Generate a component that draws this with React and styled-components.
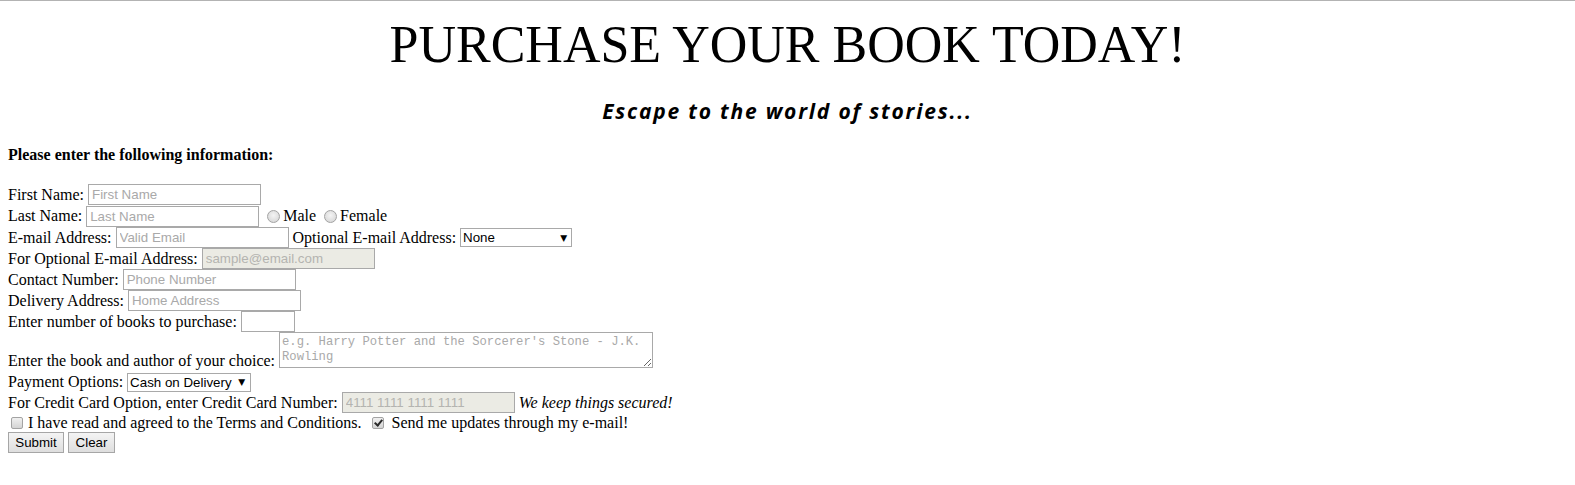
import React from "react";
import styled, {createGlobalStyle} from "styled-components";

const GlobalStyle = createGlobalStyle`
    html, body {
        margin: 0;
        padding: 0;
        background: #fff;
    }
    body {
        font-family: "Liberation Serif", "Times New Roman", serif;
        font-size: 16px;
        color: #000;
    }
`;

const CONTROL_FONT = `13.33px "Liberation Sans", Arial, sans-serif`;

const TopRule = styled.div`
    height: 1px;
    background: #b3b3b3;
`;

const Page = styled.div`
    padding: 0 8px 30px;
`;

const Title = styled.h1`
    margin: 15px 0 0;
    font-size: 52px;
    font-weight: normal;
    line-height: 57px;
    text-align: center;
`;

const Tagline = styled.h3`
    margin: 24px 0 0;
    font-family: "Open Sans", Lato, sans-serif;
    font-style: italic;
    font-weight: bold;
    font-size: 21px;
    letter-spacing: 1.8px;
    line-height: 28px;
    text-align: center;
`;

const Intro = styled.h4`
    margin: 20px 0 0;
    font-size: 16px;
    line-height: 19px;
    font-weight: bold;
`;

const Form = styled.form`
    margin-top: 20px;
    display: flex;
    flex-direction: column;
`;

const Row = styled.div`
    display: flex;
    align-items: ${p => (p.$bottom ? "flex-end" : "center")};
    gap: 4px;
    height: ${p => p.$h || 21}px;
    white-space: nowrap;
`;

const Label = styled.span`
    line-height: normal;
    margin-bottom: ${p => p.$drop || 0}px;
    font-style: ${p => (p.$italic ? "italic" : "normal")};
`;

const TextInput = styled.input`
    box-sizing: border-box;
    width: ${p => p.$w || 173}px;
    height: 21px;
    margin: 0;
    padding: 1px 3px;
    border: 1px solid #a9a9a9;
    border-radius: 0;
    background: ${p => (p.disabled ? "#ebebe4" : "#fff")};
    font: ${CONTROL_FONT};
    color: #000;
    &::placeholder {
        color: ${p => (p.disabled ? "#b4b4b0" : "#a9a9a9")};
        opacity: 1;
    }
`;

const SelectWrap = styled.span`
    position: relative;
    display: inline-flex;
    width: ${p => p.$w}px;
    height: 19px;
    &::after {
        content: "▼";
        position: absolute;
        right: ${p => p.$arrow}px;
        top: 50%;
        transform: translateY(-50%);
        font: 9px "DejaVu Sans", sans-serif;
        pointer-events: none;
    }
`;

const Select = styled.select`
    appearance: none;
    box-sizing: border-box;
    width: 100%;
    height: 100%;
    margin: 0;
    padding: 0 2px;
    border: 1px solid #a9a9a9;
    border-radius: 0;
    background: #fff;
    font: ${CONTROL_FONT};
    color: #000;
`;

const TextArea = styled.textarea`
    box-sizing: border-box;
    width: 374px;
    height: 36px;
    margin: 0 0 4px;
    padding: 2px;
    border: 1px solid #a9a9a9;
    border-radius: 0;
    font: 12.2px/15px "Liberation Mono", "Courier New", monospace;
    resize: both;
    &::placeholder {
        color: #a9a9a9;
        opacity: 1;
    }
`;

const ChoiceLabel = styled.label`
    display: inline-flex;
    align-items: center;
    gap: ${p => p.$gap || 3}px;
    line-height: normal;
`;

const Radio = styled.input.attrs({type: "radio"})`
    appearance: none;
    box-sizing: border-box;
    width: 13px;
    height: 13px;
    margin: 0 0 0 4px;
    border: 1px solid #a3a3a3;
    border-radius: 50%;
    background: radial-gradient(circle at 50% 40%, #f4f4f4 0%, #dcdcdc 70%, #cfcfcf 100%);
`;

const Check = styled.input.attrs({type: "checkbox"})`
    appearance: none;
    position: relative;
    box-sizing: border-box;
    width: 12px;
    height: 12px;
    margin: 0 0 0 ${p => p.$ml || 0}px;
    border: 1px solid #a3a3a3;
    border-radius: 2px;
    background: linear-gradient(#f0f0f0, #d4d4d4);
    &:checked::after {
        content: "";
        position: absolute;
        left: 3px;
        top: 0;
        width: 3px;
        height: 6px;
        border: solid #2a2a2a;
        border-width: 0 2px 2px 0;
        transform: rotate(40deg);
    }
`;

const Button = styled.button`
    box-sizing: border-box;
    width: ${p => p.$w}px;
    height: 21px;
    margin: 0;
    padding: 0;
    border: 1px solid #a6a6a6;
    border-radius: 0;
    background: linear-gradient(#f4f4f4, #dedede);
    font: ${CONTROL_FONT};
    color: #000;
`;

const App = () => {
    return (
        <>
            <GlobalStyle />
            <TopRule />
            <Page>
                <Title>PURCHASE YOUR BOOK TODAY!</Title>
                <Tagline>Escape to the world of stories...</Tagline>
                <Intro>Please enter the following information:</Intro>
                <Form onSubmit={e => e.preventDefault()}>
                    <Row>
                        <Label>First Name:</Label>
                        <TextInput placeholder="First Name" />
                    </Row>
                    <Row $h={22}>
                        <Label>Last Name:</Label>
                        <TextInput placeholder="Last Name" />
                        <ChoiceLabel>
                            <Radio name="gender" />
                            Male
                        </ChoiceLabel>
                        <ChoiceLabel>
                            <Radio name="gender" />
                            Female
                        </ChoiceLabel>
                    </Row>
                    <Row>
                        <Label>E-mail Address:</Label>
                        <TextInput placeholder="Valid Email" />
                        <Label>Optional E-mail Address:</Label>
                        <SelectWrap $w={112} $arrow={5}>
                            <Select defaultValue="none">
                                <option value="none">None</option>
                                <option value="yes">Yes</option>
                            </Select>
                        </SelectWrap>
                    </Row>
                    <Row>
                        <Label>For Optional E-mail Address:</Label>
                        <TextInput placeholder="sample@email.com" disabled />
                    </Row>
                    <Row>
                        <Label>Contact Number:</Label>
                        <TextInput placeholder="Phone Number" />
                    </Row>
                    <Row>
                        <Label>Delivery Address:</Label>
                        <TextInput placeholder="Home Address" />
                    </Row>
                    <Row>
                        <Label>Enter number of books to purchase:</Label>
                        <TextInput type="number" $w={54} />
                    </Row>
                    <Row $h={40} $bottom>
                        <Label $drop={2}>Enter the book and author of your choice:</Label>
                        <TextArea placeholder="e.g. Harry Potter and the Sorcerer's Stone - J.K. Rowling" />
                    </Row>
                    <Row $h={20}>
                        <Label>Payment Options:</Label>
                        <SelectWrap $w={124} $arrow={6}>
                            <Select defaultValue="cod">
                                <option value="cod">Cash on Delivery</option>
                                <option value="card">Credit Card</option>
                            </Select>
                        </SelectWrap>
                    </Row>
                    <Row>
                        <Label>For Credit Card Option, enter Credit Card Number:</Label>
                        <TextInput placeholder="4111 1111 1111 1111" disabled />
                        <Label $italic>We keep things secured!</Label>
                    </Row>
                    <Row $h={19}>
                        <ChoiceLabel $gap={5}>
                            <Check $ml={3} />
                            I have read and agreed to the Terms and Conditions.
                        </ChoiceLabel>
                        <ChoiceLabel $gap={8}>
                            <Check $ml={6} defaultChecked />
                            Send me updates through my e-mail!
                        </ChoiceLabel>
                    </Row>
                    <Row>
                        <Button type="submit" $w={56}>Submit</Button>
                        <Button type="reset" $w={47}>Clear</Button>
                    </Row>
                </Form>
            </Page>
        </>
    );
};

export default App;
